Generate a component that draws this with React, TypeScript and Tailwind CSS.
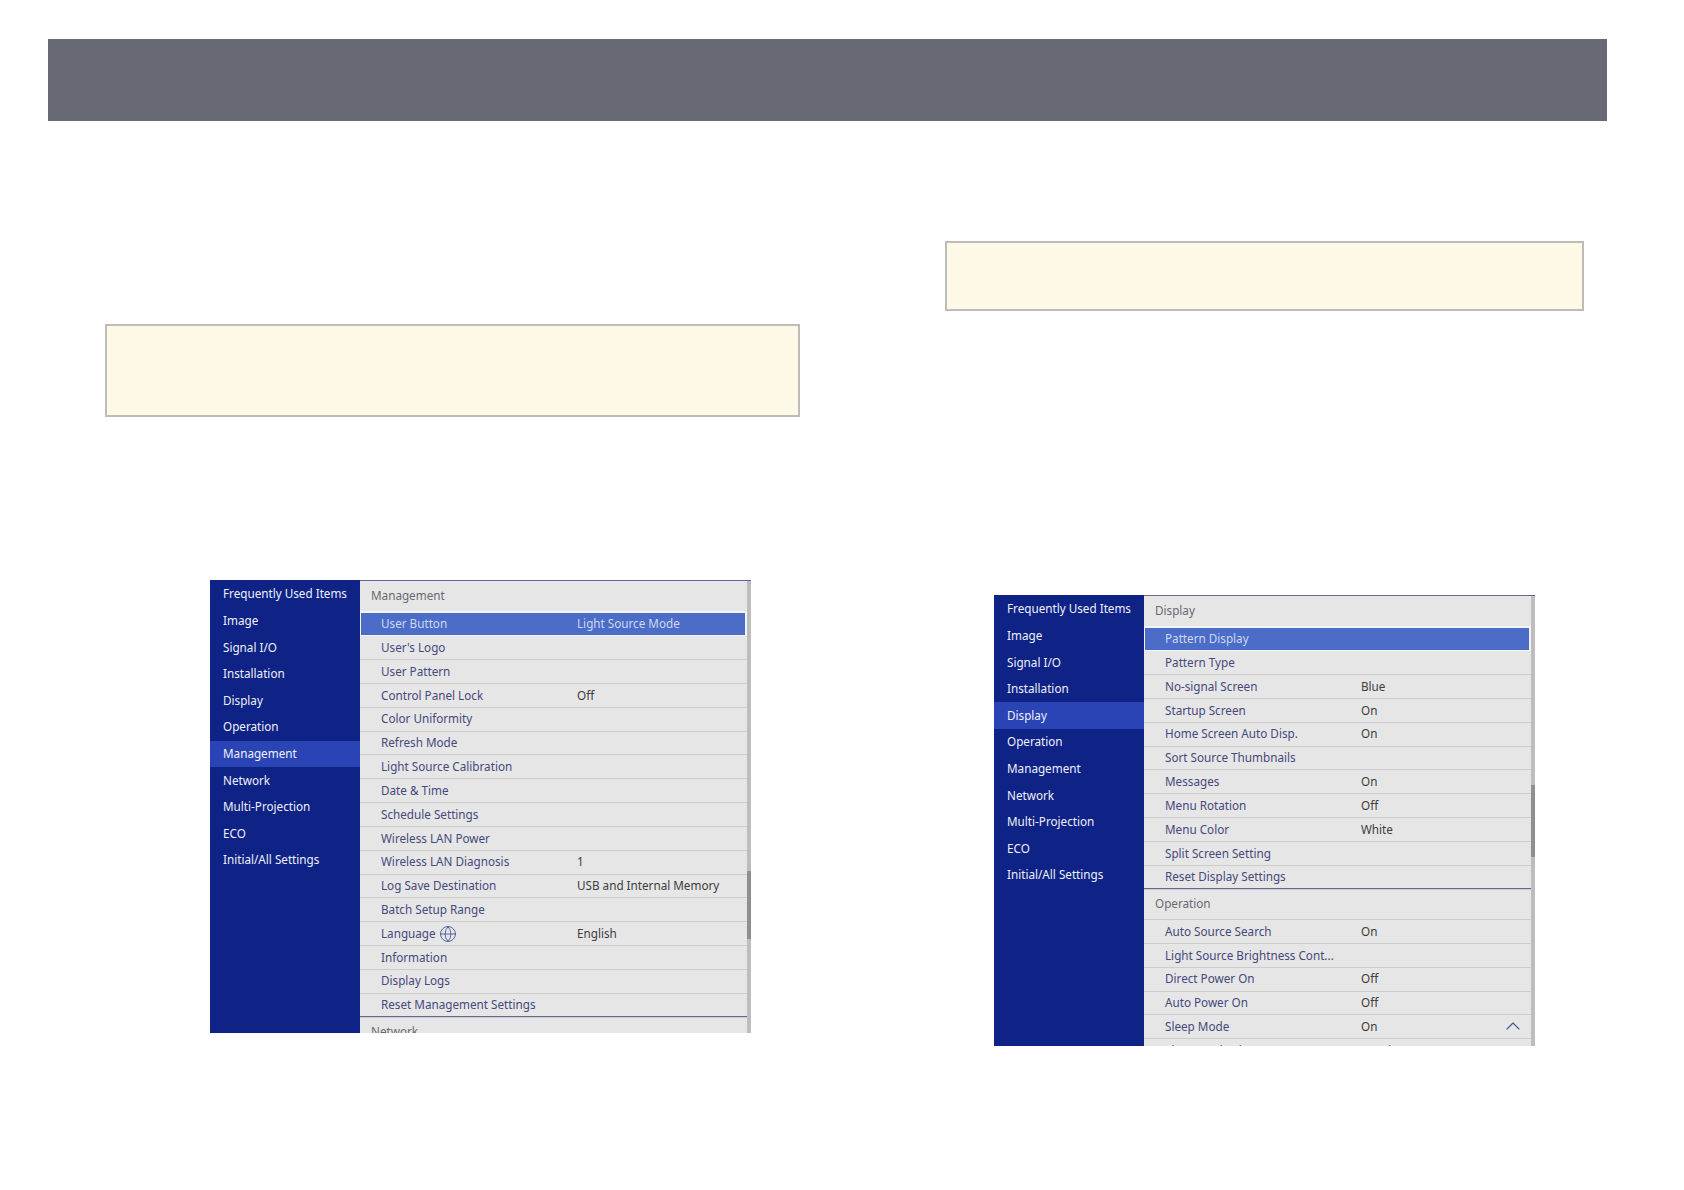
import { ChevronUp, Globe } from "lucide-react";
import type { ReactNode } from "react";

const sideItems = [
  "Frequently Used Items",
  "Image",
  "Signal I/O",
  "Installation",
  "Display",
  "Operation",
  "Management",
  "Network",
  "Multi-Projection",
  "ECO",
  "Initial/All Settings",
];

type RowData = { label: string; value?: string; icon?: ReactNode; trailing?: ReactNode };

const managementRows: RowData[] = [
  { label: "User Button", value: "Light Source Mode" },
  { label: "User's Logo" },
  { label: "User Pattern" },
  { label: "Control Panel Lock", value: "Off" },
  { label: "Color Uniformity" },
  { label: "Refresh Mode" },
  { label: "Light Source Calibration" },
  { label: "Date & Time" },
  { label: "Schedule Settings" },
  { label: "Wireless LAN Power" },
  { label: "Wireless LAN Diagnosis", value: "1" },
  { label: "Log Save Destination", value: "USB and Internal Memory" },
  { label: "Batch Setup Range" },
  { label: "Language", value: "English", icon: <Globe size={18} strokeWidth={1.1} className="ml-[3px] text-[#3d4f96]" /> },
  { label: "Information" },
  { label: "Display Logs" },
  { label: "Reset Management Settings" },
];

const displayRows: RowData[] = [
  { label: "Pattern Display" },
  { label: "Pattern Type" },
  { label: "No-signal Screen", value: "Blue" },
  { label: "Startup Screen", value: "On" },
  { label: "Home Screen Auto Disp.", value: "On" },
  { label: "Sort Source Thumbnails" },
  { label: "Messages", value: "On" },
  { label: "Menu Rotation", value: "Off" },
  { label: "Menu Color", value: "White" },
  { label: "Split Screen Setting" },
  { label: "Reset Display Settings" },
];

const operationRows: RowData[] = [
  { label: "Auto Source Search", value: "On" },
  { label: "Light Source Brightness Cont..." },
  { label: "Direct Power On", value: "Off" },
  { label: "Auto Power On", value: "Off" },
  {
    label: "Sleep Mode",
    value: "On",
    trailing: <ChevronUp size={24} strokeWidth={1.1} className="-mt-[2px] text-[#4a5590]" />,
  },
  { label: "Sleep Mode Timer", value: "15 min" },
];

function Row({ row, selected }: { row: RowData; selected?: boolean }) {
  if (selected) {
    return (
      <div className="h-[23.83px] shrink-0 bg-[#f4f4f4] pl-[1px] pr-[2px] pb-[1px]">
        <div className="flex h-full items-center bg-[#4b6cc7] pl-[20px] text-[#cfd9f2]">
          <span className="w-[196px]">{row.label}</span>
          {row.value && <span>{row.value}</span>}
        </div>
      </div>
    );
  }
  return (
    <div className="flex h-[23.83px] shrink-0 items-center border-b border-[#cdcdcd] pl-[21px] pr-[6px] text-[#45497c]">
      <span className="flex w-[196px] shrink-0 items-center">
        {row.label}
        {row.icon}
      </span>
      {row.value && <span className="text-[#3d3d3d]">{row.value}</span>}
      {row.trailing && <span className="ml-auto">{row.trailing}</span>}
    </div>
  );
}

function SectionHead({ title, first }: { title: string; first?: boolean }) {
  return (
    <div
      className={
        first
          ? "flex h-[31.5px] shrink-0 items-center border-b-2 border-[#f4f4f4] pl-[11px] text-[#666a72]"
          : "-mt-[1.5px] flex h-[32px] shrink-0 items-center border-t border-[#62668f] border-b border-b-[#cdcdcd] pb-[1px] pl-[11px] text-[#666a72]"
      }
    >
      {title}
    </div>
  );
}

function ProjectorMenu({
  active,
  thumbTop,
  thumbHeight,
  heightClass,
  children,
}: {
  active: string;
  thumbTop: number;
  thumbHeight: number;
  heightClass: string;
  children: ReactNode;
}) {
  return (
    <div className={`flex w-[541px] overflow-hidden text-[11.7px] leading-none ${heightClass}`}>
      <div className="w-[150px] shrink-0 bg-[#0f2286] pt-[1px]">
        {sideItems.map((item) => (
          <div
            key={item}
            className={
              item === active
                ? "flex h-[26.6px] items-center bg-[#2a44b5] pl-[13px] text-[#eef1fa]"
                : "flex h-[26.6px] items-center pl-[13px] text-[#eef1fa]"
            }
          >
            {item}
          </div>
        ))}
      </div>
      <div className="flex min-w-0 flex-1 border-t border-[#62668f] bg-[#e6e6e6]">
        <div className="flex min-w-0 flex-1 flex-col overflow-hidden">{children}</div>
        <div className="w-[4px] shrink-0 bg-[#bdbdbd]">
          <div className="bg-[#8f8f8f]" style={{ marginTop: thumbTop, height: thumbHeight }} />
        </div>
      </div>
    </div>
  );
}

export default function App() {
  return (
    <div
      className="h-[1190px] w-[1684px] overflow-hidden bg-white"
      style={{ fontFamily: '"Noto Sans", "Open Sans", sans-serif' }}
    >
      <div className="mx-[48px] mt-[39px] h-[82px] w-[1559px] bg-[#676a72]" />
      <div className="flex">
        {/* left page column */}
        <div className="w-[945px] shrink-0 pl-[105px]">
          <div className="mt-[203px] h-[93px] w-[695px] border-2 border-[#bdbcb6] bg-[#fdf9e6]" />
          <div className="ml-[105px] mt-[163px]">
            <ProjectorMenu active="Management" thumbTop={290} thumbHeight={68} heightClass="h-[453px]">
              <SectionHead title="Management" first />
              {managementRows.map((row, i) => (
                <Row key={row.label} row={row} selected={i === 0} />
              ))}
              <SectionHead title="Network" />
            </ProjectorMenu>
          </div>
        </div>
        {/* right page column */}
        <div className="flex-1">
          <div className="mt-[120px] h-[70px] w-[639px] border-2 border-[#bdbcb6] bg-[#fdf9e6]" />
          <div className="ml-[49px] mt-[284px]">
            <ProjectorMenu active="Display" thumbTop={189} thumbHeight={72} heightClass="h-[451px]">
              <SectionHead title="Display" first />
              {displayRows.map((row, i) => (
                <Row key={row.label} row={row} selected={i === 0} />
              ))}
              <SectionHead title="Operation" />
              {operationRows.map((row) => (
                <Row key={row.label} row={row} />
              ))}
            </ProjectorMenu>
          </div>
        </div>
      </div>
    </div>
  );
}
